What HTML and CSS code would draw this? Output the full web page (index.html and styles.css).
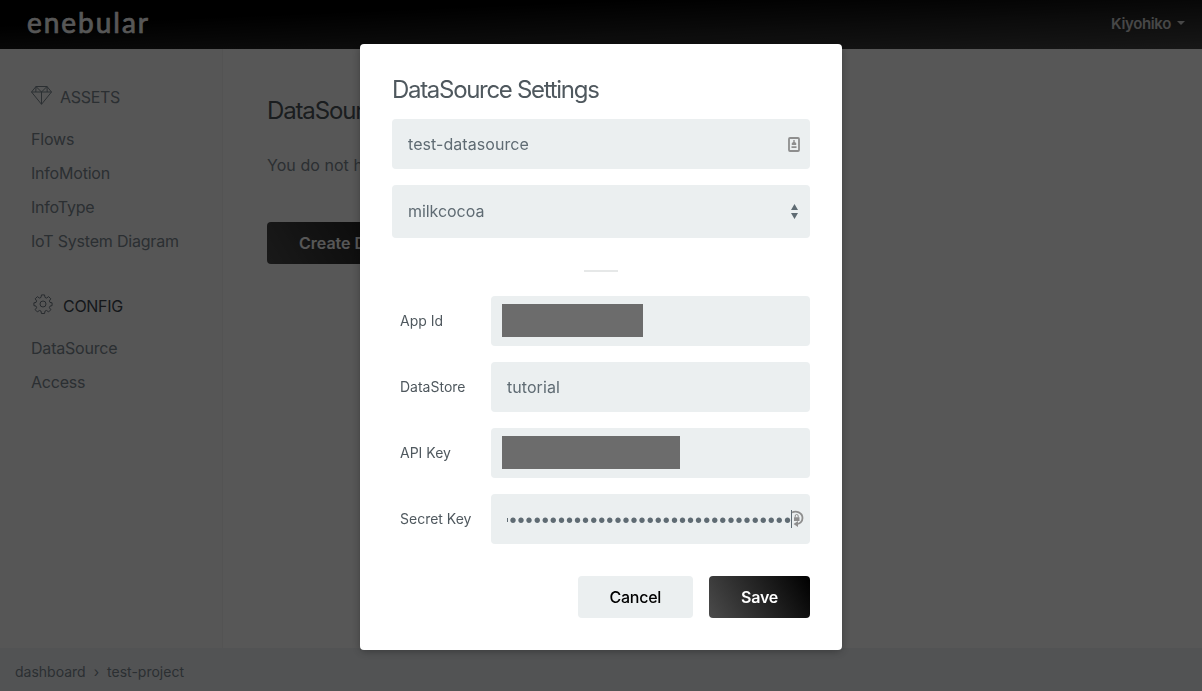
FILE: index.html
```html
<!DOCTYPE html>
<html lang="en">
<head>
<meta charset="utf-8">
<title>enebular</title>
<link rel="stylesheet" href="styles.css">
</head>
<body>
<div class="app">
  <header class="topbar">
    <svg class="logo" width="132" height="40" viewBox="0 0 132 40" role="img"><text x="1" y="28" textLength="121" lengthAdjust="spacing">enebular</text></svg>
    <div class="user"><span>Kiyohiko</span><i class="caret"></i></div>
  </header>
  <div class="body">
    <nav class="sidebar">
      <div class="group">
        <svg class="gem" width="21" height="19" viewBox="0 0 21 19"><path d="M5 .5h11l4.500 5.500L10.500 18.300.5 6zM.5 6h20M5 .5 L4.800 6M5 .5l5.500 5.500L16 .5l.2 5.500M10.500 6v12.300"/></svg>
        <span>ASSETS</span>
      </div>
      <ul class="links">
        <li>Flows</li><li>InfoMotion</li><li>InfoType</li><li>IoT System Diagram</li>
      </ul>
      <div class="group group-active">
        <svg class="gear" width="20" height="20" viewBox="0 0 22 22"><path d="M9.300 1h3.400l.5 2.800 1.700.7 2.300-1.600 2.400 2.400L18 7.600l.7 1.700 2.300.4v3.100l-2.300.5-.7 1.700 1.600 2.300-2.400 2.400-2.300-1.600-1.700.7-.5 2.700H9.300l-.5-2.700-1.700-.7-2.300 1.600-2.400-2.400L4 15l-.7-1.700-2.300-.5V9.700l2.300-.4L4 7.600 2.400 5.300l2.400-2.400 2.300 1.600 1.700-.7z"/><circle cx="11" cy="11" r="3.300"/></svg>
        <span>CONFIG</span>
      </div>
      <ul class="links">
        <li>DataSource</li><li>Access</li>
      </ul>
    </nav>
    <main class="content">
      <h1>DataSource List</h1>
      <p>You do not have any data sources.</p>
      <button class="btn dark create">Create DataSource</button>
    </main>
  </div>
  <footer class="crumbs"><span>dashboard</span><span class="sep">›</span><span>test-project</span></footer>
</div>

<div class="overlay">
  <form class="modal">
    <h2>DataSource Settings</h2>
    <div class="field name"><span>test-datasource</span>
      <svg class="card" width="12" height="15" viewBox="0 0 12 15"><rect x="1" y="1" width="10" height="13" rx="1"/><path class="solid" d="M5.300 3h1.400v2l1.500 1v2H3.800V6l1.500-1zM3.500 9.300h5v1.700h-5z"/></svg>
    </div>
    <div class="field select"><span>milkcocoa</span>
      <svg class="arrows" width="7" height="15" viewBox="0 0 7 15"><path d="M3.500 0 7 6H0zM0 9h7l-3.500 6z"/></svg>
    </div>
    <div class="rule"></div>
    <div class="row"><label>App Id</label><div class="field masked"><i class="mask mask-id"></i></div></div>
    <div class="row"><label>DataStore</label><div class="field"><span>tutorial</span></div></div>
    <div class="row"><label>API Key</label><div class="field masked"><i class="mask mask-key"></i></div></div>
    <div class="row"><label>Secret Key</label><div class="field secret"><span class="dots"><i class="half"></i><span>•••••••••••••••••••••••••••••••••••</span></span><i class="cursor"></i>
      <svg class="lock" width="13" height="18" viewBox="0 0 13 18"><path d="M1 2.500C5 .2 11.500 2.500 11.500 8c0 3.800-2.900 5.800-5.500 5.800"/><path class="solid" d="M7 11v6L2.500 14zM3 7.300h5.500v3.700H3z"/><path class="shackle" d="M4.200 7.500V6a1.500 1.500 0 0 1 3 0v1.500"/></svg>
    </div></div>
    <div class="actions"><button type="button" class="btn cancel">Cancel</button><button type="button" class="btn dark save">Save</button></div>
  </form>
</div>
</body>
</html>
```

FILE: styles.css
```css
* { box-sizing: border-box; }
body { margin: 0; font-family: Inter, "Liberation Sans", sans-serif; font-size: 16px; color: #7e8a93; overflow: hidden; }
h1, h2, p, ul { margin: 0; padding: 0; font-weight: 400; }
ul { list-style: none; }
.app { height: 691px; display: flex; flex-direction: column; background: #fff; }
.topbar { height: 49px; flex: none; display: flex; align-items: center; justify-content: space-between; padding: 0 17px 0 26px; background: linear-gradient(to bottom right, #000 25%, #454545); }
.logo text { font: 400 28px Lato, sans-serif; fill: #fff; stroke: #fff; stroke-width: .7px; stroke-linejoin: round; }
.user { display: flex; align-items: center; gap: 6px; color: #cfcfcf; font-weight: 600; font-size: 15px; letter-spacing: -.35px; }
.caret { border: 4px solid transparent; border-top-color: #cfcfcf; border-bottom: 0; margin-top: -4px; }
.user span { margin-top: -2px; }
.body { flex: 1; display: flex; }
.sidebar { width: 223px; padding: 35px 0 0 31px; background: #fcfcfc; border-right: 1px solid #f3f3f3; }
.group { display: flex; align-items: center; height: 26px; gap: 8px; letter-spacing: -.3px; }
.group svg { fill: none; stroke: currentColor; stroke-width: 1; }
.gem { margin-top: -3px; }
.gear { margin: -4px 2px 0 2px; }
.group-active { margin-top: 35px; color: #3f4850; }
.group-active svg { color: #65707a; margin-right: 2px; }
.links { padding-top: 12px; }
.links li { height: 34px; line-height: 34px; letter-spacing: -.2px; }
.content { padding: 47px 44px; }
.content h1 { font-size: 24px; line-height: 30px; letter-spacing: -1.150px; color: #4d565c; }
.content p { margin-top: 29px; line-height: 20px; white-space: nowrap; letter-spacing: .05px; }
.btn { height: 42px; border: 0; border-radius: 4px; font: 500 16px Inter, sans-serif; padding: 0 32px; letter-spacing: -.25px; }
.dark { color: #fff; font-weight: 600; background: linear-gradient(60deg, #4b4b4b, #000); }
.create { margin-top: 47px; letter-spacing: 0; }
.crumbs { height: 43px; flex: none; display: flex; align-items: center; gap: 8px; padding: 4px 15px 0; background: #f1f4f7; font-size: 14px; }

.overlay { position: fixed; inset: 0; display: flex; justify-content: center; align-items: flex-start; padding-top: 44px; background: rgba(0, 0, 0, .66); }
.modal { width: 482px; height: 606px; padding: 32px; border-radius: 4px; background: #fff; box-shadow: 0 2px 10px rgba(0, 0, 0, .3); color: #5f6b73; }
.modal h2 { font-size: 24px; line-height: 28px; letter-spacing: -1.300px; color: #4f585e; margin-bottom: 15px; }
.field { height: 50px; border-radius: 4px; background: #ebeff0; padding: 0 16px; display: flex; align-items: center; justify-content: space-between; flex: 1; letter-spacing: .06px; }
.name { padding-right: 10px; }
.select { height: 53px; margin-top: 16px; padding-right: 12px; }
.select span { margin-top: -2px; letter-spacing: -.05px; }
.arrows { fill: #5f6b73; }
.card, .lock { fill: none; stroke: #8e8e8e; stroke-width: 1.800; }
.solid { fill: #8e8e8e; stroke: none; }
.shackle { stroke-width: 1; }
.rule { width: 34px; height: 2px; margin: 32px auto 24px; background: #e6e8e8; }
.row { display: flex; align-items: center; margin-bottom: 16px; }
.row label { width: 99px; flex: none; padding: 0 0 2px 8px; font-size: 14px; color: #4f585e; }
.masked { padding: 0 11px; }
.mask { height: 33px; margin-top: -1px; background: #6c6c6c; }
.mask-id { width: 141px; }
.mask-key { width: 178px; }
.secret { min-width: 0; padding-right: 5px; justify-content: flex-start; }
.dots { width: 284px; flex: none; display: flex; align-items: center; justify-content: space-between; font: 20px/24px "Liberation Sans", sans-serif; letter-spacing: 1.070px; padding-top: 1px; }
.dots span { margin-right: -1px; white-space: nowrap; }
.half { width: 1px; height: 4px; background: #5f6b73; }
.cursor { width: 1px; height: 18px; background: #5f6b73; }
.lock { flex: none; margin-left: -1px; }
.actions { display: flex; justify-content: flex-end; gap: 16px; padding-top: 16px; }
.cancel { background: #ebeff0; color: #000; }
```
